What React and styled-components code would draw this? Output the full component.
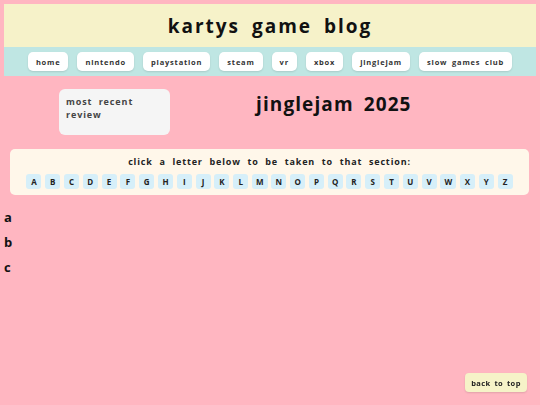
import React from 'react';
import styled, { createGlobalStyle } from 'styled-components';

const LETTERS = 'ABCDEFGHIJKLMNOPQRSTUVWXYZ'.split('');
const NAV_LINKS = ['home', 'nintendo', 'playstation', 'steam', 'vr', 'xbox', 'jinglejam', 'slow games club'];
const SECTIONS = ['a', 'b', 'c'];

const GlobalStyle = createGlobalStyle`
  body {
    margin: 0;
    background: #ffb6c1;
    font-family: "Open Sans", "DejaVu Sans", sans-serif;
    color: #111;
  }
`;

const Page = styled.div`
  padding: 4px;
`;

const Header = styled.header`
  background: #f6f2c9;
  height: 43px;
  display: flex;
  align-items: center;
  justify-content: center;
`;

const Title = styled.h1`
  margin: 0;
  font-size: 19px;
  font-weight: 700;
  letter-spacing: 2px;
  word-spacing: 5px;
  color: #111;
`;

const Nav = styled.nav`
  background: #bfe6e3;
  height: 29px;
  display: flex;
  align-items: center;
  justify-content: center;
  gap: 9px;
`;

const NavButton = styled.a`
  flex-shrink: 0;
  white-space: nowrap;
  background: #fff;
  border-radius: 5px;
  height: 19px;
  padding: 0 8px;
  display: flex;
  align-items: center;
  font-size: 7.5px;
  font-weight: 700;
  letter-spacing: 0.8px;
  word-spacing: 2px;
  color: #333;
  box-shadow: 0 1px 2px rgba(0, 0, 0, 0.12);
`;

const FeatureRow = styled.section`
  display: flex;
  align-items: flex-start;
  margin-top: 13px;
  padding-left: 55px;
  gap: 86px;
`;

const ReviewCard = styled.div`
  width: 111px;
  height: 46px;
  box-sizing: border-box;
  background: #f5f5f5;
  border-radius: 6px;
  padding: 6px 7px;
  font-size: 9px;
  font-weight: 700;
  line-height: 13px;
  letter-spacing: 0.9px;
  word-spacing: 3px;
  color: #444;
`;

const FeatureHeading = styled.h2`
  margin: 2px 0 0;
  font-size: 19px;
  font-weight: 700;
  letter-spacing: 1.1px;
  word-spacing: 4px;
  color: #111;
`;

const LetterBox = styled.div`
  margin: 14px 7px 0 6px;
  background: #fff7ea;
  border-radius: 5px;
  padding: 6px 0 6px;
  display: flex;
  flex-direction: column;
  align-items: center;
  gap: 6px;
`;

const LetterPrompt = styled.p`
  margin: 0;
  font-size: 9px;
  font-weight: 700;
  letter-spacing: 0.85px;
  word-spacing: 3.5px;
  line-height: 13px;
  color: #222;
`;

const LetterRow = styled.div`
  display: flex;
  gap: 3.8px;
`;

const LetterButton = styled.a`
  background: #d6eff9;
  border-radius: 3px;
  height: 15px;
  min-width: 15px;
  box-sizing: border-box;
  padding: 0 4px;
  display: flex;
  align-items: center;
  justify-content: center;
  font-size: 8px;
  font-weight: 700;
  color: #222;
`;

const Sections = styled.div`
  margin-top: 10px;
`;

const SectionHeading = styled.h3`
  margin: 0;
  font-size: 13px;
  font-weight: 700;
  line-height: 25px;
  color: #111;
`;

const BackToTop = styled.a`
  position: fixed;
  right: 13px;
  bottom: 13px;
  width: 62px;
  height: 19px;
  background: #f6f3c8;
  border-radius: 4px;
  display: flex;
  align-items: center;
  justify-content: center;
  font-size: 7.5px;
  font-weight: 700;
  letter-spacing: 0.4px;
  word-spacing: 1.5px;
  color: #222;
  box-shadow: 0 1px 2px rgba(0, 0, 0, 0.12);
`;

export default function App() {
  return (
    <Page>
      <GlobalStyle />
      <Header>
        <Title>kartys game blog</Title>
      </Header>
      <Nav>
        {NAV_LINKS.map((link) => (
          <NavButton key={link}>{link}</NavButton>
        ))}
      </Nav>
      <FeatureRow>
        <ReviewCard>most recent review</ReviewCard>
        <FeatureHeading>jinglejam 2025</FeatureHeading>
      </FeatureRow>
      <LetterBox>
        <LetterPrompt>click a letter below to be taken to that section:</LetterPrompt>
        <LetterRow>
          {LETTERS.map((letter) => (
            <LetterButton key={letter}>{letter}</LetterButton>
          ))}
        </LetterRow>
      </LetterBox>
      <Sections>
        {SECTIONS.map((s) => (
          <SectionHeading key={s}>{s}</SectionHeading>
        ))}
      </Sections>
      <BackToTop>back to top</BackToTop>
    </Page>
  );
}
